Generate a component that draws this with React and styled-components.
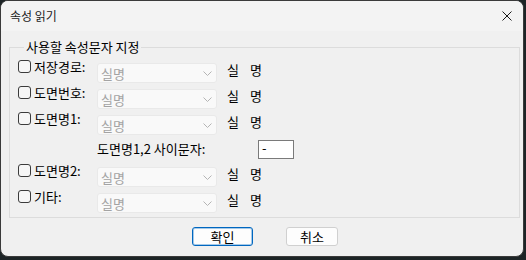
import React from "react";
import styled, { createGlobalStyle } from "styled-components";

const Global = createGlobalStyle`
  html, body { margin: 0; padding: 0; }
  body {
    width: 526px; height: 260px; overflow: hidden;
    background: #1d2426;
    font-family: "Noto Sans CJK KR", "Noto Sans", sans-serif;
  }
`;

const Window = styled.div`
  width: 524px;
  height: 257px;
  box-sizing: border-box;
  border: 1px solid #3a3a3a;
  border-radius: 8px;
  overflow: hidden;
  background: #f0f0f0;
  display: flex;
  flex-direction: column;
`;

const TitleBar = styled.div`
  height: 30px;
  flex: none;
  background: #f3f3f3;
  display: flex;
  align-items: center;
  justify-content: space-between;
  padding: 0 10px 0 9px;
  font-size: 12px;
  color: #1a1a1a;
`;

const Title = styled.span`
  line-height: 16px;
`;

const CloseIcon = styled.svg`
  width: 10px;
  height: 10px;
  margin-right: 1px;
`;

const Body = styled.div`
  padding: 8px 0 0 8px;
  display: flex;
  flex-direction: column;
`;

const Group = styled.fieldset`
  width: 511px;
  box-sizing: border-box;
  margin: 0;
  padding: 5px 0 1px 8px;
  border: 1px solid #dcdcdc;
  border-radius: 0;
  min-width: 0;
`;

const Legend = styled.legend`
  margin-left: 6px;
  padding: 0 2px;
  font-size: 13px;
  line-height: 16px;
  color: #000;
`;

const Rows = styled.div`
  display: flex;
  flex-direction: column;
`;

const Row = styled.div`
  display: grid;
  grid-template-columns: 79px 120px 10px 23px auto;
  align-items: start;
  height: 26px;
`;

const CheckLabel = styled.label`
  display: flex;
  align-items: flex-start;
  gap: 3px;
  font-size: 13px;
  line-height: 14px;
  color: #000;
`;

const Box = styled.span`
  width: 13px;
  height: 13px;
  box-sizing: border-box;
  border: 1px solid #3b3b3b;
  border-radius: 3px;
  background: #f6f6f6;
  flex: none;
`;

const LabelText = styled.span``;

const Combo = styled.div`
  grid-column: 2;
  margin-top: 3px;
  height: 20px;
  box-sizing: border-box;
  border: 1px solid #e9e9e9;
  border-radius: 3px;
  background: #f9f9f9;
  display: flex;
  align-items: center;
  justify-content: space-between;
  padding: 0 4px 0 3px;
  font-size: 13px;
  color: #a3a3a3;
`;

const Chevron = styled.svg`
  width: 9px;
  height: 5px;
`;

const Static = styled.span`
  grid-column: ${(p) => p.$col};
  margin-top: 2px;
  font-size: 13px;
  line-height: 16px;
  color: #000;
`;

const SepRow = styled.div`
  display: grid;
  grid-template-columns: 79px 161px 36px;
  align-items: start;
  height: 26px;
  padding-top: 2px;
  box-sizing: border-box;
`;

const SepText = styled.span`
  grid-column: 2;
  font-size: 13px;
  line-height: 16px;
  margin-top: 1px;
  color: #000;
`;

const TextBox = styled.div`
  grid-column: 3;
  width: 36px;
  height: 19px;
  box-sizing: border-box;
  border: 1px solid #7a7a7a;
  background: #fff;
  font-size: 13px;
  line-height: 14px;
  padding-left: 3px;
  color: #000;
`;

const Buttons = styled.div`
  display: flex;
  gap: 33px;
  padding-left: 183px;
  margin-top: 9px;
`;

const Button = styled.div`
  width: ${(p) => p.$w}px;
  height: 19px;
  box-sizing: border-box;
  border: 1px solid ${(p) => (p.$primary ? "#0067c0" : "#d0d0d0")};
  box-shadow: ${(p) => (p.$primary ? "inset 0 0 0 1px rgba(0,103,192,0.35)" : "none")};
  border-radius: 3px;
  background: #fdfdfd;
  display: flex;
  align-items: center;
  justify-content: center;
  font-size: 13px;
  color: #000;
`;

const fields = [
  { label: "저장경로:" },
  { label: "도면번호:" },
  { label: "도면명1:" },
  { sep: true },
  { label: "도면명2:" },
  { label: "기타:" },
];

function FieldRow({ label }) {
  return (
    <Row>
      <CheckLabel>
        <Box />
        <LabelText>{label}</LabelText>
      </CheckLabel>
      <Combo>
        <span>실명</span>
        <Chevron viewBox="0 0 9 5">
          <path d="M0.5 0.5 L4.5 4.5 L8.5 0.5" fill="none" stroke="#b4b4b4" strokeWidth="1" />
        </Chevron>
      </Combo>
      <Static $col={4}>실</Static>
      <Static $col={5}>명</Static>
    </Row>
  );
}

export default function App() {
  return (
    <>
      <Global />
      <Window>
        <TitleBar>
          <Title>속성 읽기</Title>
          <CloseIcon viewBox="0 0 10 10">
            <path d="M0.5 0.5 L9.5 9.5 M9.5 0.5 L0.5 9.5" stroke="#1a1a1a" strokeWidth="1" fill="none" />
          </CloseIcon>
        </TitleBar>
        <Body>
          <Group>
            <Legend>사용할 속성문자 지정</Legend>
            <Rows>
              {fields.map((f, i) =>
                f.sep ? (
                  <SepRow key={i}>
                    <SepText>도면명1,2 사이문자:</SepText>
                    <TextBox>-</TextBox>
                  </SepRow>
                ) : (
                  <FieldRow key={i} label={f.label} />
                )
              )}
            </Rows>
          </Group>
          <Buttons>
            <Button $primary $w={61}>확인</Button>
            <Button $w={52}>취소</Button>
          </Buttons>
        </Body>
      </Window>
    </>
  );
}
